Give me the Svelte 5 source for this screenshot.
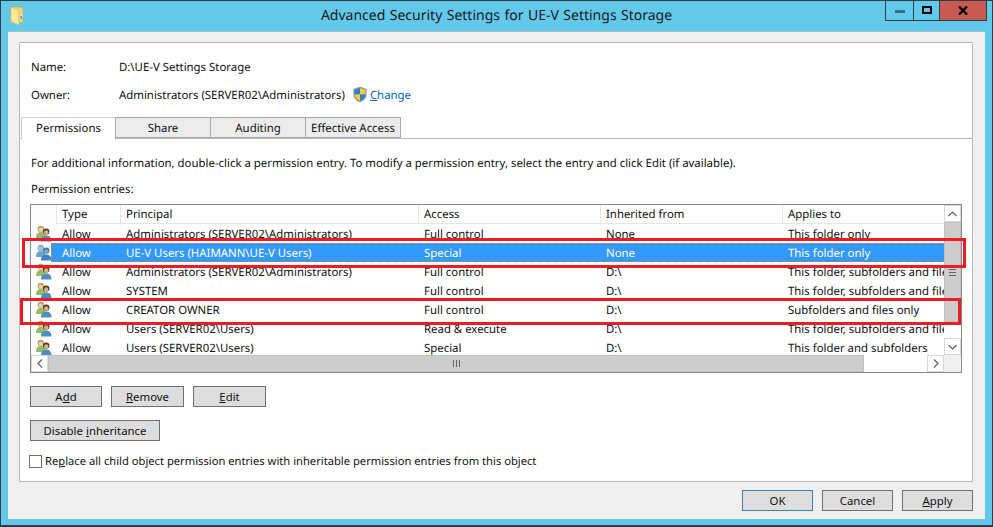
<script>
  const rows = [
    { principal: "Administrators (SERVER02\\Administrators)", access: "Full control", from: "None", applies: "This folder only" },
    { principal: "UE-V Users (HAIMANN\\UE-V Users)", access: "Special", from: "None", applies: "This folder only", selected: true },
    { principal: "Administrators (SERVER02\\Administrators)", access: "Full control", from: "D:\\", applies: "This folder, subfolders and files" },
    { principal: "SYSTEM", access: "Full control", from: "D:\\", applies: "This folder, subfolders and files" },
    { principal: "CREATOR OWNER", access: "Full control", from: "D:\\", applies: "Subfolders and files only" },
    { principal: "Users (SERVER02\\Users)", access: "Read & execute", from: "D:\\", applies: "This folder, subfolders and files" },
    { principal: "Users (SERVER02\\Users)", access: "Special", from: "D:\\", applies: "This folder and subfolders" }
  ];
  const columns = ["", "Type", "Principal", "Access", "Inherited from", "Applies to"];
</script>

<div class="window">
  <div class="titlebar">
    <div class="title-left">
      <svg width="15" height="20" viewBox="0 0 15 20">
        <path d="M1 1h9l3 1.500V16l-3 .5H1z" fill="#f0d26e" stroke="#d3b257" stroke-width="0.7" />
        <path d="M1 1l8 3.500v14.500l-8-3.500z" fill="#f9e79a" stroke="#d8ba62" stroke-width="0.7" />
        <rect x="10.500" y="8" width="1.500" height="2" fill="#e8f0f4" />
        <rect x="10.500" y="10" width="1.500" height="3" fill="#4fa3d8" />
      </svg>
    </div>
    <div class="title">Advanced Security Settings for UE-V Settings Storage</div>
    <div class="controls">
      <div class="ctl min"><span></span></div>
      <div class="ctl max"><span></span></div>
      <div class="ctl close">
        <svg width="10" height="9" viewBox="0 0 10 9"><path d="M1 0.500l8 8M9 0.500l-8 8" stroke="#000" stroke-width="2.400" /></svg>
      </div>
    </div>
  </div>

  <div class="client">
    <div class="panel">
      <div class="meta">
        <span class="label">Name:</span>
        <span>D:\UE-V Settings Storage</span>
      </div>
      <div class="meta owner">
        <span class="label">Owner:</span>
        <span>Administrators (SERVER02\Administrators)</span>
        <svg class="shield" width="16" height="17" viewBox="0 0 16 17">
          <path d="M8 .8l6.600 2.200v5.400c0 3.800-3 6.500-6.600 7.800-3.600-1.300-6.600-4-6.600-7.800V3z" fill="#8a98a8" />
          <path d="M8 2.200v6.300H2.600V3.800z" fill="#2f7fd0" />
          <path d="M8 2.200l5.400 1.600v4.700H8z" fill="#f3cf3a" />
          <path d="M8 8.500h5.400c-.2 3-2.500 5-5.400 6.200z" fill="#2f7fd0" />
          <path d="M8 8.500H2.600c.2 3 2.500 5 5.400 6.200z" fill="#f3cf3a" />
        </svg>
        <a class="link" href="#change"><u>C</u>hange</a>
      </div>

      <div class="tabs">
        <div class="tab active">Permissions</div>
        <div class="tab">Share</div>
        <div class="tab">Auditing</div>
        <div class="tab">Effective Access</div>
      </div>

      <div class="tab-body">
        <p class="hint">For additional information, double-click a permission entry. To modify a permission entry, select the entry and click Edit (if available).</p>
        <p class="entries">Permission entries:</p>

        <div class="list">
          <div class="list-main">
            <div class="list-view">
              <div class="head">
                {#each columns as col}
                  <div class="head-cell">{col}</div>
                {/each}
              </div>
              {#each rows as row}
                <div class="row" class:selected={row.selected}>
                  <div class="icon-cell">
                    <svg width="17" height="17" viewBox="0 0 17 17">
                      <path d="M1 13c0-4 1.800-6 4.800-6s4.800 2 4.800 6z" fill={row.selected ? "#6fa3c8" : "#96bd66"} />
                      <circle cx="5.800" cy="4" r="3.200" fill={row.selected ? "#86acc8" : "#b99d5e"} />
                      <circle cx="5.800" cy="4.800" r="2.200" fill={row.selected ? "#a4c4dc" : "#f0cfa2"} />
                      <path d="M6 16.500c0-4 2-6 5.200-6s5.300 2 5.300 6z" fill={row.selected ? "#3f86c8" : "#4f8fc0"} />
                      <circle cx="11.200" cy="6.600" r="3.200" fill={row.selected ? "#47789f" : "#4a3a2c"} />
                      <circle cx="11.200" cy="7.500" r="2.200" fill={row.selected ? "#79a5c6" : "#dfae7e"} />
                    </svg>
                  </div>
                  <div class="cells">
                    <div class="cell type">Allow</div>
                    <div class="cell principal">{row.principal}</div>
                    <div class="cell access">{row.access}</div>
                    <div class="cell from">{row.from}</div>
                    <div class="cell applies">{row.applies}</div>
                  </div>
                </div>
              {/each}
            </div>
            <div class="vscroll">
              <div class="sb-btn">
                <svg width="9" height="6" viewBox="0 0 9 6"><path d="M.5 5l4-4 4 4" fill="none" stroke="#606060" stroke-width="1.200" /></svg>
              </div>
              <div class="sb-thumb-v">
                <span class="grip"></span>
              </div>
              <div class="sb-track"></div>
              <div class="sb-btn">
                <svg width="9" height="6" viewBox="0 0 9 6"><path d="M.5 1l4 4 4-4" fill="none" stroke="#606060" stroke-width="1.200" /></svg>
              </div>
            </div>
          </div>
          <div class="hscroll">
            <div class="sb-btn-h">
              <svg width="6" height="9" viewBox="0 0 6 9"><path d="M5 .5l-4 4 4 4" fill="none" stroke="#606060" stroke-width="1.200" /></svg>
            </div>
            <div class="sb-thumb-h"><span class="grip-h"></span></div>
            <div class="sb-track"></div>
            <div class="sb-btn-h">
              <svg width="6" height="9" viewBox="0 0 6 9"><path d="M1 .5l4 4-4 4" fill="none" stroke="#606060" stroke-width="1.200" /></svg>
            </div>
            <div class="corner"></div>
          </div>
        </div>

        <div class="actions">
          <button class="btn small">A<u>d</u>d</button>
          <button class="btn small"><u>R</u>emove</button>
          <button class="btn small"><u>E</u>dit</button>
        </div>
        <button class="btn inherit">Disable <u>i</u>nheritance</button>
        <div class="replace">
          <span class="checkbox"></span>
          <span>Re<u>p</u>lace all child object permission entries with inheritable permission entries from this object</span>
        </div>
      </div>
    </div>

    <div class="footer">
      <button class="btn foot default">OK</button>
      <button class="btn foot">Cancel</button>
      <button class="btn foot"><u>A</u>pply</button>
    </div>
  </div>

  <!-- annotation boxes drawn over the screenshot -->
  <div class="mark mark-a"></div>
  <div class="mark mark-b"></div>
</div>

<style>
  :global(body) {
    margin: 0;
    background: #63c9ea;
  }

  .window {
    position: relative;
    width: 993px;
    height: 527px;
    box-sizing: border-box;
    border: 1px solid #2f3d44;
    border-bottom-width: 2px;
    background: #63c9ea;
    font-family: "Noto Sans", sans-serif;
    font-size: 11.4px;
    text-rendering: geometricPrecision;
    color: #111;
    overflow: hidden;
  }

  .titlebar {
    height: 30px;
    display: grid;
    grid-template-columns: 1fr auto 1fr;
    align-items: start;
  }

  .title-left {
    padding: 5px 0 0 9px;
  }

  .title {
    font-size: 14px;
    word-spacing: 0.8px;
    line-height: 30px;
    color: #1a1a1a;
  }

  .controls {
    justify-self: end;
    display: flex;
    height: 21px;
    margin-right: 5px;
    margin-top: -1px;
    border: 1px solid #2f3d44;
    border-top: none;
    box-sizing: border-box;
  }

  .ctl {
    display: flex;
    align-items: center;
    justify-content: center;
  }

  .min {
    width: 27px;
    border-right: 1px solid #2f3d44;
  }

  .min span {
    width: 10px;
    height: 3px;
    margin-top: 3px;
    background: #2f6f88;
  }

  .max {
    width: 25px;
    border-right: 1px solid #2f3d44;
  }

  .max span {
    width: 6px;
    height: 4px;
    border: 2px solid #000;
  }

  .close {
    width: 46px;
    background: #c75b50;
  }

  .client {
    margin: 0 7px 0 7px;
    height: 488px;
    background: #f0f0f0;
    border-top: 1px solid #9fc0cf;
    box-sizing: border-box;
    padding: 10px 12px 0 11px;
  }

  .panel {
    height: 440px;
    box-sizing: border-box;
    background: #fff;
    border: 1px solid #b8b8b8;
    padding-top: 13px;
  }

  .meta {
    display: flex;
    align-items: center;
    height: 20px;
    box-sizing: border-box;
    padding: 2px 0 0 11px;
    white-space: nowrap;
  }

  .owner {
    margin-top: 8px;
  }

  .owner svg {
    margin-top: -2px;
  }

  .label {
    width: 88px;
  }

  .shield {
    margin-left: 7px;
  }

  .link {
    margin-left: 2px;
    color: #0066cc;
    text-decoration: none;
  }

  .tabs {
    display: flex;
    margin-top: 13px;
    padding-left: 1px;
    height: 21px;
    border-bottom: 1px solid #b8b8b8;
  }

  .tab {
    width: 95px;
    height: 21px;
    box-sizing: border-box;
    text-align: center;
    line-height: 22px;
    background: #ececec;
    border: 1px solid #a9a9a9;
    border-left: none;
    white-space: nowrap;
  }

  .tab.active {
    height: 22px;
    background: #fff;
    border-left: 1px solid #d0d0d0;
    border-top-color: #d0d0d0;
    border-bottom: none;
  }

  .tab-body {
    padding: 0 11px 0 10px;
  }

  .hint {
    margin: 16px 0 0;
    padding-left: 1px;
    line-height: 18px;
    white-space: nowrap;
  }

  .entries {
    margin: 8px 0 0;
    padding-left: 1px;
    line-height: 18px;
  }

  .list {
    margin-top: 5px;
    height: 169px;
    width: 932px;
    box-sizing: border-box;
    border: 1px solid #828790;
    display: flex;
    flex-direction: column;
    background: #fff;
  }

  .list-main {
    display: flex;
    height: 150px;
  }

  .list-view {
    width: 914px;
    overflow: hidden;
  }

  .head {
    display: grid;
    grid-template-columns: 26px 64px 298px 182px 182px 162px;
    height: 19px;
    border-bottom: 1px solid #e5e5e5;
    box-sizing: border-box;
  }

  .head-cell {
    border-right: 1px solid #e5e5e5;
    padding-left: 5px;
    line-height: 20px;
  }

  .head-cell:first-child {
    background: #fbfbfb;
  }

  .row {
    display: flex;
    height: 19px;
    line-height: 19px;
  }

  .icon-cell {
    width: 20px;
    flex: none;
    display: flex;
    align-items: center;
    justify-content: flex-end;
  }

  .icon-cell svg {
    margin-right: -1px;
  }

  .cells {
    display: grid;
    grid-template-columns: 69px 298px 182px 182px 163px;
    grid-template-rows: 19px;
    flex: 1;
    box-sizing: border-box;
  }

  .selected .cells {
    background: #3399ff;
    color: #fff;
    outline: 1px dotted #c98a3c;
    outline-offset: -1px;
  }

  .cell {
    padding: 1px 0 0 6px;
    white-space: nowrap;
    overflow: hidden;
  }

  .type {
    padding-left: 11px;
  }

  .vscroll {
    width: 17px;
    display: flex;
    flex-direction: column;
    background: #fff;
  }

  .sb-btn {
    height: 17px;
    flex: none;
    display: flex;
    align-items: center;
    justify-content: center;
    background: #fff;
    border: 1px solid #d8d8d8;
    box-sizing: border-box;
  }

  .sb-thumb-v {
    height: 100px;
    flex: none;
    background: #cdcdcd;
    box-sizing: border-box;
    border: 1px solid #c0c0c0;
    display: flex;
    align-items: center;
    justify-content: center;
  }

  .grip {
    width: 7px;
    height: 5px;
    border-top: 1px solid #666;
    border-bottom: 1px solid #666;
    position: relative;
  }

  .grip::after {
    content: "";
    position: absolute;
    left: 0;
    right: 0;
    top: 2px;
    height: 1px;
    background: #666;
  }

  .sb-track {
    flex: 1;
    background: #fff;
  }

  .hscroll {
    display: flex;
    height: 17px;
    background: #fff;
  }

  .sb-btn-h {
    width: 17px;
    flex: none;
    display: flex;
    align-items: center;
    justify-content: center;
    background: #fff;
    border: 1px solid #d8d8d8;
    box-sizing: border-box;
  }

  .sb-thumb-h {
    width: 816px;
    flex: none;
    background: #cdcdcd;
    box-sizing: border-box;
    border: 1px solid #c0c0c0;
    display: flex;
    align-items: center;
    justify-content: center;
  }

  .grip-h {
    width: 5px;
    height: 7px;
    border-left: 1px solid #666;
    border-right: 1px solid #666;
    position: relative;
  }

  .grip-h::after {
    content: "";
    position: absolute;
    top: 0;
    bottom: 0;
    left: 2px;
    width: 1px;
    background: #666;
  }

  .corner {
    width: 17px;
    flex: none;
    background: #f0f0f0;
  }

  .actions {
    display: flex;
    gap: 9px;
    margin-top: 13px;
  }

  .btn {
    display: block;
    height: 21px;
    padding: 0;
    box-sizing: border-box;
    background: #dddddd;
    border: 1px solid #707070;
    border-radius: 0;
    font: inherit;
    color: #111;
    white-space: nowrap;
  }

  .small {
    width: 73px;
  }

  .small:first-child {
    width: 72px;
  }

  .inherit {
    margin-top: 13px;
    width: 130px;
  }

  .replace {
    display: flex;
    align-items: center;
    height: 18px;
    margin-top: 11px;
    font-size: 11.2px;
    white-space: nowrap;
  }

  .checkbox {
    width: 13px;
    height: 13px;
    flex: none;
    box-sizing: border-box;
    background: #fff;
    border: 1px solid #707070;
    margin-left: -1px;
    margin-right: 3px;
  }

  .footer {
    display: flex;
    justify-content: flex-end;
    gap: 9px;
    margin-top: 8px;
  }

  .foot {
    width: 71px;
  }

  .default {
    border-color: #3c7fb1;
  }

  .mark {
    position: absolute;
    box-sizing: border-box;
    border: 3px solid #ed1c24;
  }

  .mark-a {
    left: 21px;
    top: 237px;
    width: 944px;
    height: 30px;
  }

  .mark-b {
    left: 19px;
    top: 297px;
    width: 941px;
    height: 27px;
  }
</style>
